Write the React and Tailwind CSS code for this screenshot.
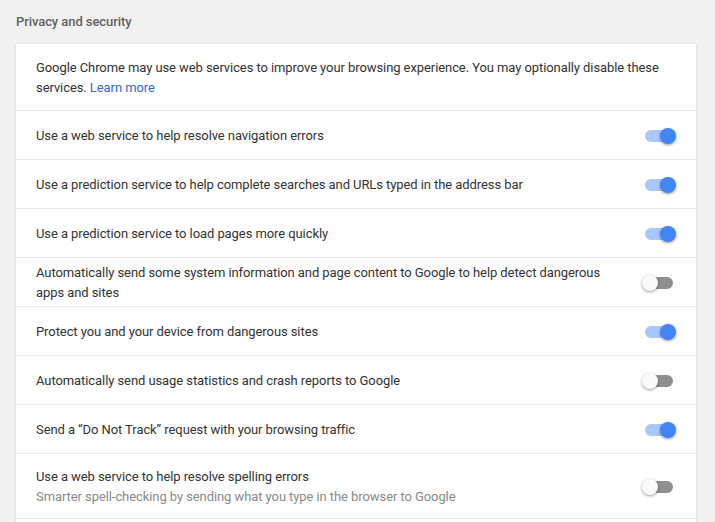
import React from "react";

const rows = [
  { label: "Use a web service to help resolve navigation errors", on: true },
  {
    label:
      "Use a prediction service to help complete searches and URLs typed in the address bar",
    on: true,
  },
  { label: "Use a prediction service to load pages more quickly", on: true },
  {
    label:
      "Automatically send some system information and page content to Google to help detect dangerous apps and sites",
    on: false,
  },
  { label: "Protect you and your device from dangerous sites", on: true },
  {
    label: "Automatically send usage statistics and crash reports to Google",
    on: false,
  },
  {
    label: "Send a \u201CDo Not Track\u201D request with your browsing traffic",
    on: true,
  },
  {
    label: "Use a web service to help resolve spelling errors",
    sub: "Smarter spell-checking by sending what you type in the browser to Google",
    on: false,
  },
];

const Toggle = ({ on }) => (
  <div className="relative w-[34px] h-4 shrink-0">
    <div
      className={
        "absolute left-[3px] right-[3px] top-[2px] h-3 rounded-full " +
        (on ? "bg-[#a8c7fa]" : "bg-[#8f8f8f]")
      }
    />
    <div
      className={
        "absolute top-0 w-4 h-4 rounded-full shadow-[0_1px_3px_rgba(0,0,0,0.4)] " +
        (on ? "right-0 bg-[#4285f4]" : "left-0 bg-[#fafafa]")
      }
    />
  </div>
);

const Row = ({ label, sub, on }) => (
  <div
    className={
      "flex items-center justify-between border-t border-[#e9e9e9] pl-5 pr-5 " +
      (sub ? "pt-[13px] pb-[11px]" : "min-h-[49px] pt-[2px]")
    }
  >
    <div className="pr-8 leading-5">
      <div className="text-[#333333]">{label}</div>
      {sub && <div className="text-[#8a8a8a]">{sub}</div>}
    </div>
    <Toggle on={on} />
  </div>
);

export default function App() {
  return (
    <div
      className="min-h-screen bg-[#f1f1f1] px-4 pt-[12px] text-[13px] tracking-[-0.08px]"
      style={{ fontFamily: "Roboto, 'Liberation Sans', sans-serif" }}
    >
      <h2 className="leading-5 text-[#616161] font-medium mb-[12px]">
        Privacy and security
      </h2>
      <div className="w-[680px] bg-white shadow-[0_1px_3px_rgba(0,0,0,0.12),0_1px_1px_rgba(0,0,0,0.06)]">
        <div className="px-5 pt-[14px] pb-[12px] leading-5 text-[#333333]">
          Google Chrome may use web services to improve your browsing experience. You
          may optionally disable these services.{" "}
          <a className="text-[#3367d6] cursor-pointer">Learn more</a>
        </div>
        {rows.map((r, i) => (
          <Row key={i} {...r} />
        ))}
        <div className="h-6 border-t border-[#e9e9e9]" />
      </div>
    </div>
  );
}
